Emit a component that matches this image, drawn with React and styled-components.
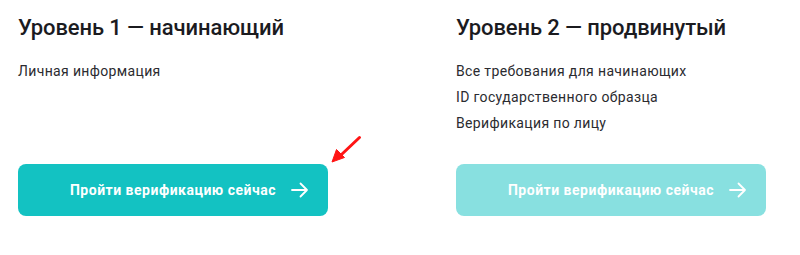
import React from "react";
import styled, { createGlobalStyle } from "styled-components";

const Global = createGlobalStyle`
  html, body { margin: 0; padding: 0; background: #ffffff; }
  body { font-family: Roboto, "Noto Sans", Arial, sans-serif; -webkit-font-smoothing: antialiased; }
`;

const Page = styled.div`
  position: relative;
  display: grid;
  grid-template-columns: 438px 310px;
  align-items: stretch;
  padding: 14px 0 0 18px;
  box-sizing: border-box;
  width: 800px;
`;

const Column = styled.section`
  display: flex;
  flex-direction: column;
  align-items: flex-start;
`;

const Title = styled.h2`
  margin: 0 0 16px;
  font-size: 22px;
  line-height: 28px;
  font-weight: 500;
  color: #1b1b1f;
  letter-spacing: -0.1px;
`;

const List = styled.ul`
  margin: 0 0 28px;
  padding: 0;
  list-style: none;
`;

const Item = styled.li`
  font-size: 14px;
  line-height: 26px;
  letter-spacing: 0.35px;
  color: #2b2b30;
`;

const Button = styled.button`
  position: relative;
  margin-top: auto;
  width: 310px;
  height: 52px;
  border: none;
  border-radius: 8px;
  background: #13c2c2;
  opacity: ${(p) => (p.$disabled ? 0.5 : 1)};
  color: #ffffff;
  font-family: inherit;
  font-size: 14px;
  font-weight: 700;
  letter-spacing: 0.5px;
  cursor: ${(p) => (p.$disabled ? "default" : "pointer")};
  display: flex;
  align-items: center;
  justify-content: center;
  padding: 0;
`;

const ArrowIcon = styled.svg`
  position: absolute;
  right: 19px;
  top: 50%;
  transform: translateY(-50%);
`;

const Pointer = styled.svg`
  position: absolute;
  left: 328px;
  top: 132px;
`;

const Arrow = () => (
  <ArrowIcon width="18" height="16" viewBox="0 0 18 16" fill="none">
    <path d="M1 8h15M9.5 1.5L16 8l-6.5 6.5" stroke="#fff" strokeWidth="1.8" strokeLinecap="round" strokeLinejoin="round" />
  </ArrowIcon>
);

const levels = [
  { title: "Уровень 1 — начинающий", items: ["Личная информация"], disabled: false },
  {
    title: "Уровень 2 — продвинутый",
    items: ["Все требования для начинающих", "ID государственного образца", "Верификация по лицу"],
    disabled: true,
  },
];

export default function App() {
  return (
    <>
      <Global />
      <Page>
        {levels.map((l) => (
          <Column key={l.title}>
            <Title>{l.title}</Title>
            <List>
              {l.items.map((i) => (
                <Item key={i}>{i}</Item>
              ))}
            </List>
            <Button $disabled={l.disabled}>
              Пройти верификацию сейчас
              <Arrow />
            </Button>
          </Column>
        ))}
        <Pointer width="36" height="34" viewBox="0 0 36 34">
          <path d="M31.5 5.5L13 23" stroke="#ff1414" strokeWidth="3" strokeLinecap="round" />
          <path d="M4 30L8.5 17.5L16.5 25.5Z" fill="#ff1414" stroke="#ff1414" strokeWidth="1" strokeLinejoin="round" />
        </Pointer>
      </Page>
    </>
  );
}
